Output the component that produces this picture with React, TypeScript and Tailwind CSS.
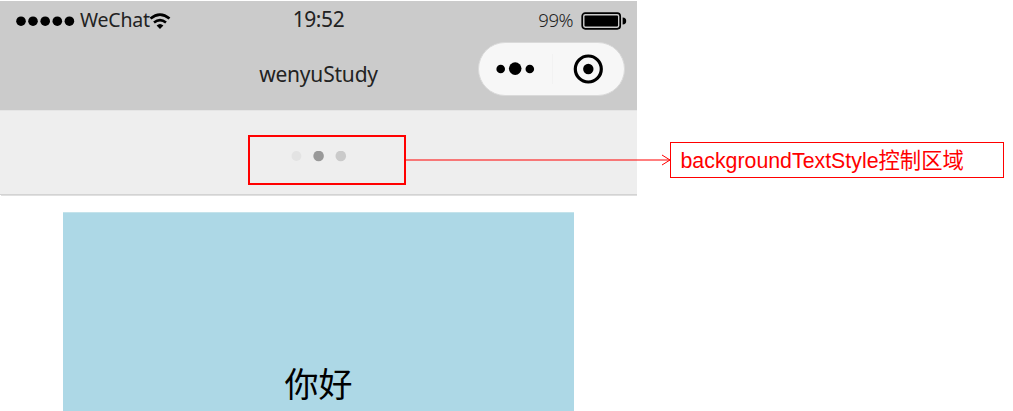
function StatusBar() {
  return (
    <div className="grid h-[40px] grid-cols-3 text-[#222]">
      <div className="flex h-[40px] items-center pl-[16px]">
        <svg className="shrink-0" width="59" height="10" viewBox="0 0 59 10">
          {[5, 17, 29.2, 41.3, 53.4].map((x) => (
            <circle key={x} cx={x} cy="5.2" r="4.8" fill="#000" />
          ))}
        </svg>
        <span className="ml-[5px] w-[69px] shrink-0 pb-[2px] text-[19.5px] leading-[36px] tracking-[-0.2px] whitespace-nowrap">WeChat</span>
        <svg className="shrink-0" width="22" height="16" viewBox="0 0 22 16" fill="none" stroke="#000">
          <path d="M1.5 5.5 Q11 -2.3 20.5 5.5" strokeWidth="2.7" />
          <path d="M5 9.6 Q11 4.7 17 9.6" strokeWidth="2.6" />
          <path d="M7.6 12.6 Q11 9.5 14.4 12.6 L11 16 Z" fill="#000" stroke="none" />
        </svg>
      </div>
      <div className="text-center text-[21px] leading-[37px] tracking-[-0.4px]">19:52</div>
      <div className="flex h-[40px] items-center justify-end pr-[10px]">
        <span className="mr-[8px] pb-[2px] text-[18.5px] leading-[36px] font-light tracking-[-0.5px]">99%</span>
        <svg width="46" height="18" viewBox="0 0 46 18">
          <rect x="1.2" y="1.2" width="38" height="15.6" rx="3" fill="none" stroke="#000" strokeWidth="1.7" />
          <rect x="3.5" y="3.5" width="33.5" height="11" rx="1" fill="#000" />
          <path d="M41.6 5.5 C44.2 5.5 45.2 7 45.2 9 S44.2 12.5 41.6 12.5 Z" fill="#000" />
        </svg>
      </div>
    </div>
  );
}

function Capsule() {
  return (
    <div className="flex h-[54px] w-[147px] items-center rounded-full border border-[#dadada] bg-[#f7f7f7]">
      <svg width="145" height="52" viewBox="0 0 145 52">
        <circle cx="21.7" cy="26" r="4.3" />
        <circle cx="36.2" cy="25.6" r="6.3" />
        <circle cx="50.8" cy="26" r="4.3" />
        <path d="M73.5 11V41" stroke="#f2f2f2" />
        <circle cx="109.3" cy="26" r="13" fill="none" stroke="#000" strokeWidth="3.2" />
        <circle cx="109.3" cy="26" r="5.2" />
      </svg>
    </div>
  );
}

function Phone() {
  return (
    <div className="flex h-[411px] w-[637px] flex-col pt-px font-['Noto_Sans','Noto_Sans_CJK_SC',sans-serif]">
      <header className="flex h-[109px] shrink-0 flex-col bg-[#cbcbcb]">
        <StatusBar />
        <div className="grid grid-cols-3">
          <div className="col-start-2 pt-[13px] text-center text-[21px] leading-[40px] tracking-[-0.2px] text-[#222]">wenyuStudy</div>
          <div className="flex justify-end pt-px pr-[12px]">
            <Capsule />
          </div>
        </div>
      </header>
      <div className="flex h-[85px] shrink-0 justify-center border-t border-b border-t-[#e5e5e5] border-b-[#d3d3d3] bg-[#eee] pt-[40px]">
        <svg className="h-[12px] w-[58px]" viewBox="0 0 58 12">
          <circle cx="6.4" cy="5" r="4.9" fill="#e3e3e3" />
          <circle cx="28.6" cy="5" r="5.3" fill="#999" />
          <circle cx="50.8" cy="5" r="5.3" fill="#cacaca" />
        </svg>
      </div>
      <div className="ml-px h-px shrink-0 bg-[#e0e0e0]" />
      <main className="flex flex-1 px-[63px] pt-[16px]">
        <div className="flex-1 border-t border-[#c4e3eb] bg-[#add8e6] pt-[145px] text-center text-[34px] leading-[50px] text-black">
          <span className="font-['Noto_Sans_CJK_SC',sans-serif]">你好</span>
        </div>
      </main>
    </div>
  );
}

export default function App() {
  return (
    <div className="relative h-[411px] w-[1013px] overflow-hidden bg-white">
      <Phone />
      <div className="absolute top-[135px] left-[248px] h-[50px] w-[158px] border-2 border-[#f00]" />
      <svg className="absolute top-[154px] left-[406px]" width="265" height="12" viewBox="0 0 265 12" fill="none">
        <path d="M0 6H264" stroke="#ff0000" strokeOpacity="0.5" strokeWidth="2" />
        <path d="M256 1L264 6L256 11" stroke="#f00" strokeWidth="1" />
      </svg>
      <div className="absolute top-[142px] left-[670px] h-[36px] w-[334px] border border-[#f00] pt-px pl-[9.5px] font-['Liberation_Sans','Noto_Sans_CJK_SC',sans-serif] text-[21.33px] leading-[35px] whitespace-nowrap text-[#f00]">
        backgroundTextStyle控制区域
      </div>
    </div>
  );
}
